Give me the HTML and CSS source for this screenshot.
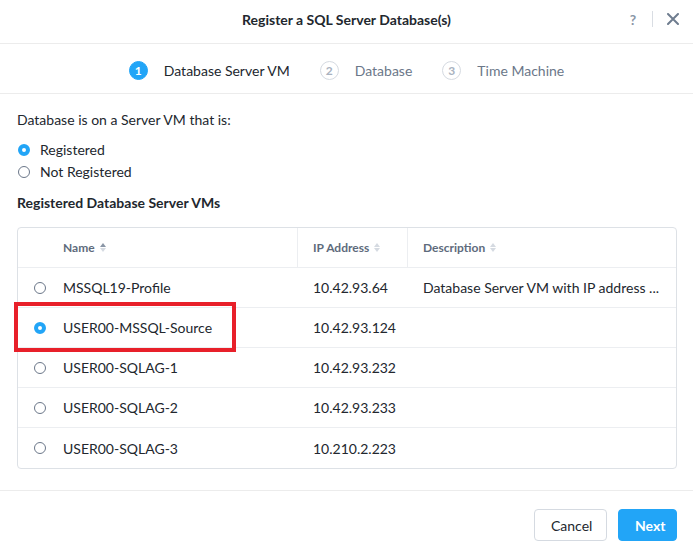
FILE: index.html
```html
<!DOCTYPE html>
<html>
<head>
<meta charset="utf-8">
<link rel="stylesheet" href="styles.css">
</head>
<body>
<div class="modal">
  <div class="header">
    <div class="title">Register a SQL Server Database(s)</div>
    <div class="actions">
      <span class="help">?</span>
      <span class="sep"></span>
      <svg class="close" width="12" height="12" viewBox="0 0 12 12"><path d="M1 1L11 11M11 1L1 11" stroke="#6f7d8f" stroke-width="2" stroke-linecap="round"/></svg>
    </div>
  </div>
  <div class="steps">
    <div class="step active"><span class="num">1</span><span class="label">Database Server VM</span></div>
    <div class="step"><span class="num">2</span><span class="label">Database</span></div>
    <div class="step"><span class="num">3</span><span class="label">Time Machine</span></div>
  </div>
  <div class="body">
    <div class="question">Database is on a Server VM that is:</div>
    <div class="options">
      <label class="opt"><span class="radio checked"></span>Registered</label>
      <label class="opt"><span class="radio"></span>Not Registered</label>
    </div>
    <div class="section">Registered Database Server VMs</div>
    <div class="table">
      <div class="row head">
        <div class="c sel"></div>
        <div class="c name">Name <span class="sort up"><i class="t"></i><i class="b"></i></span></div>
        <div class="c ip">IP Address <span class="sort"><i class="t"></i><i class="b"></i></span></div>
        <div class="c desc">Description <span class="sort"><i class="t"></i><i class="b"></i></span></div>
      </div>
      <div class="row">
        <div class="c sel"><span class="radio"></span></div>
        <div class="c name">MSSQL19-Profile</div>
        <div class="c ip">10.42.93.64</div>
        <div class="c desc">Database Server VM with IP address ...</div>
      </div>
      <div class="row">
        <div class="c sel"><span class="radio checked"></span></div>
        <div class="c name">USER00-MSSQL-Source</div>
        <div class="c ip">10.42.93.124</div>
        <div class="c desc"></div>
        <div class="highlight"></div>
      </div>
      <div class="row">
        <div class="c sel"><span class="radio"></span></div>
        <div class="c name">USER00-SQLAG-1</div>
        <div class="c ip">10.42.93.232</div>
        <div class="c desc"></div>
      </div>
      <div class="row">
        <div class="c sel"><span class="radio"></span></div>
        <div class="c name">USER00-SQLAG-2</div>
        <div class="c ip">10.42.93.233</div>
        <div class="c desc"></div>
      </div>
      <div class="row last">
        <div class="c sel"><span class="radio"></span></div>
        <div class="c name">USER00-SQLAG-3</div>
        <div class="c ip">10.210.2.223</div>
        <div class="c desc"></div>
      </div>
    </div>
  </div>
  <div class="footer">
    <button class="btn cancel">Cancel</button>
    <button class="btn next">Next</button>
  </div>
</div>
</body>
</html>
```
FILE: styles.css
```css
* { box-sizing: border-box; }
html, body { margin: 0; padding: 0; background: #fff; }
body { font-family: "Lato", "Noto Sans", sans-serif; color: #22272e; font-size: 14px; }
.modal { width: 693px; height: 559px; display: flex; flex-direction: column; }
.header { height: 44px; border-bottom: 1px solid #ececec; display: flex; align-items: center; justify-content: center; position: relative; padding-bottom: 5px; }
.title { font-weight: 700; font-size: 14px; color: #22272e; }
.actions { position: absolute; right: 14px; top: 0; height: 38px; display: flex; align-items: center; }
.help { color: #8a96a6; font-size: 14px; font-weight: 700; width: 10px; text-align: center; }
.sep { width: 1px; height: 16px; background: #d9dde3; margin: 0 14px 0 14px; }
.close { display: block; }
.steps { height: 50px; border-bottom: 1px solid #ececec; display: flex; justify-content: center; align-items: center; gap: 30px; padding-top: 4px; }
.step { display: flex; align-items: center; gap: 16px; font-size: 14px; color: #6b7789; }
.step .num { width: 19px; height: 19px; border-radius: 50%; border: 1px solid #d5dae1; display: flex; align-items: center; justify-content: center; font-size: 12px; font-weight: 700; color: #a9b2bf; }
.step.active { color: #22272e; }
.step.active .num { background: #22a5f7; border-color: #22a5f7; color: #fff; }
.body { padding: 17px 16px 0 17px; flex: 1; }
.question { font-size: 14px; line-height: 18px; }
.options { margin-top: 12px; display: flex; flex-direction: column; gap: 4px; }
.opt { display: flex; align-items: center; gap: 10px; line-height: 18px; }
.radio { width: 12px; height: 12px; border-radius: 50%; border: 1px solid #6b7789; display: inline-block; flex: none; margin-left: 1px; }
.radio.checked { border: 4px solid #22a5f7; background: #fff; }
.section { margin-top: 13px; font-weight: 700; font-size: 14px; line-height: 18px; }
.table { margin-top: 15px; border: 1px solid #dde1e6; border-radius: 4px; }
.row { display: flex; height: 40px; border-bottom: 1px solid #eceef1; position: relative; align-items: stretch; }
.row.last { border-bottom: none; height: 40px; }
.c { display: flex; align-items: center; padding-left: 15px; }
.c.sel { width: 30px; padding-left: 15px; }
.c.name { width: 250px; padding-left: 15px; }
.c.ip { width: 110px; }
.c.desc { flex: 1; }
.head .c { font-size: 12px; font-weight: 700; color: #5e6b7c; }
.head .c.name, .head .c.ip { border-right: 1px solid #eceef1; }
.sort { display: inline-flex; flex-direction: column; gap: 1px; margin-left: 5px; }
.sort i { width: 0; height: 0; border-left: 3px solid transparent; border-right: 3px solid transparent; }
.sort .t { border-bottom: 4px solid #d5dae1; }
.sort .b { border-top: 4px solid #d5dae1; }
.sort.up .t { border-bottom-color: #8a96a6; }
.highlight { position: absolute; left: -4px; top: -6px; width: 222px; height: 50px; border: 4px solid #e8202a; }
.footer { height: 69px; border-top: 1px solid #ececec; display: flex; justify-content: flex-end; align-items: center; padding-right: 16px; gap: 11px; margin-bottom: 0; }
.btn { font-family: inherit; font-size: 14px; height: 32px; border-radius: 4px; padding: 0 16px; cursor: pointer; }
.cancel { background: #fff; border: 1px solid #d5dae1; color: #22272e; width: 73px; }
.next { background: #22a5f7; border: 1px solid #22a5f7; color: #fff; font-weight: 700; width: 59px; }
```
